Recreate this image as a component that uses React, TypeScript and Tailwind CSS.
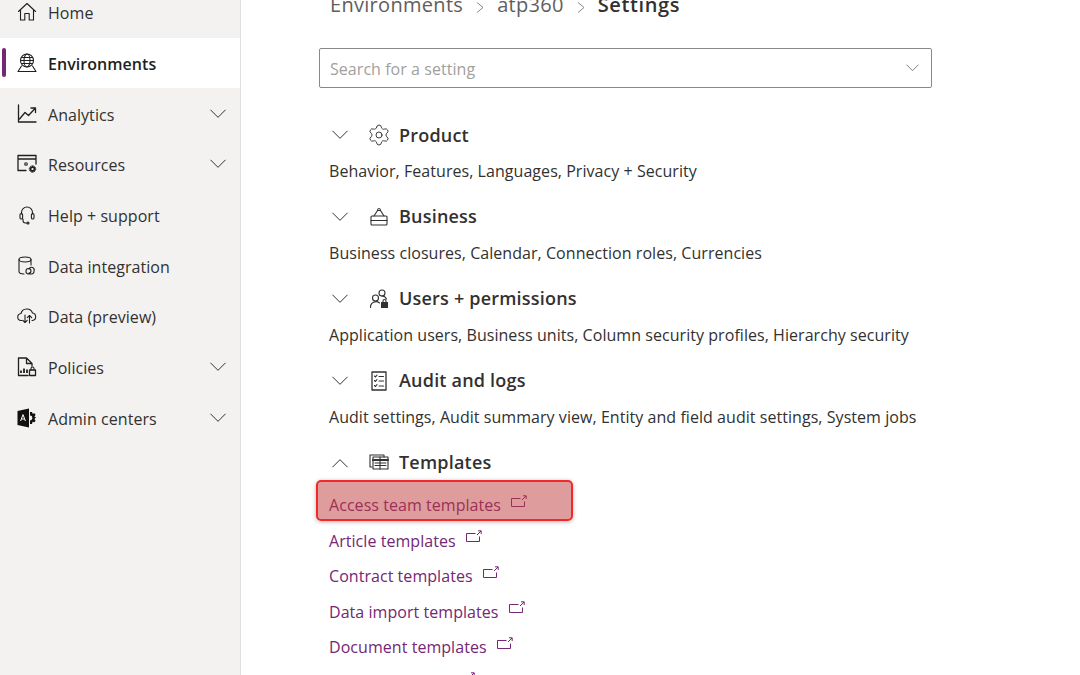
import React from 'react';
import { Settings } from 'lucide-react';

type IconProps = { className?: string };

const Svg: React.FC<IconProps & { children: React.ReactNode; box?: string }> = ({ className, children, box = '0 0 20 20' }) => (
  <svg className={className} viewBox={box} fill="none" stroke="currentColor" strokeWidth={1.1} strokeLinejoin="round" strokeLinecap="round">
    {children}
  </svg>
);

const Chevron: React.FC<{ up?: boolean; className?: string }> = ({ up, className }) => (
  <svg className={className} viewBox="0 0 20 12" fill="none" stroke="currentColor" strokeWidth={1.2}>
    <path d={up ? 'M1 11 L10 2 L19 11' : 'M1 1 L10 10 L19 1'} />
  </svg>
);

const CrumbArrow = () => (
  <svg className="mx-[13px] mt-[4px] h-[11px] w-[8px] text-[#8a8886]" viewBox="0 0 8 11" fill="none" stroke="currentColor" strokeWidth={1}>
    <path d="M1 0.5 L7 5.5 L1 10.5" />
  </svg>
);

const HomeIcon = ({ className }: IconProps) => (
  <Svg className={className}>
    <path d="M1.5 9.5 L10 1.5 L18.5 9.5 M3.5 8 V18 H7.8 V11.5 H12.2 V18 H16.5 V8" />
  </Svg>
);
const GlobeIcon = ({ className }: IconProps) => (
  <Svg className={className}>
    <circle cx="10" cy="7.5" r="6.5" />
    <ellipse cx="10" cy="7.5" rx="3" ry="6.5" />
    <path d="M3.5 7.5 H16.5 M4.5 4.5 H15.5 M4.5 10.5 H15.5 M4.5 13 L1 18.5 H19 L15.5 13" />
  </Svg>
);
const ChartIcon = ({ className }: IconProps) => (
  <Svg className={className}>
    <path d="M1.5 1 V18 H19" strokeWidth={1.3} />
    <path d="M2.5 15 L8 8.5 L11.5 11.5 L18 4.5 M14 4 H18.5 V8.5" strokeWidth={1.3} />
  </Svg>
);
const ResourceIcon = ({ className }: IconProps) => (
  <Svg className={className}>
    <path d="M9 16.5 H1 V1.5 H19 V10 M1 5 H19" strokeWidth={1.3} />
    <circle cx="9" cy="10" r="1.3" />
    <circle cx="15.5" cy="15" r="2" strokeWidth={1.8} strokeDasharray="1.6 0.6" />
    <circle cx="15.5" cy="15" r="3.2" strokeWidth={1} strokeDasharray="1.2 1.2" />
  </Svg>
);
const HeadsetIcon = ({ className }: IconProps) => (
  <Svg className={className}>
    <path d="M4.5 9 V7.5 a5.5 5.5 0 0 1 11 0 V9" />
    <rect x="3" y="8.5" width="2.6" height="5.5" rx="1.3" />
    <rect x="14.4" y="8.5" width="2.6" height="5.5" rx="1.3" />
    <path d="M6 14 V15.5 a2.5 2.5 0 0 0 2.5 2.5 H10" />
    <circle cx="11" cy="18" r="1" />
  </Svg>
);
const DataIntegrationIcon = ({ className }: IconProps) => (
  <Svg className={className}>
    <ellipse cx="8" cy="3.5" rx="6" ry="2.5" />
    <path d="M2 3.5 V15.5 C2 17 4 18 7 18 M14 3.5 V9" />
    <path d="M9 15 a2.5 2.5 0 0 1 5 0 a2 2 0 0 1 -2 2 M12 13 a2.5 2.5 0 0 1 5 2 a2.5 2.5 0 0 1 -2.5 3 H11 a2.5 2.5 0 0 1 -2 -3" />
  </Svg>
);
const CloudIcon = ({ className }: IconProps) => (
  <Svg className={className}>
    <path d="M5 14.5 H4.5 a3.5 3.5 0 0 1 -0.5 -7 a6 6 0 0 1 11.5 -0.5 a3.8 3.8 0 0 1 0 7.5 H15" />
    <path d="M8 9 V16.5 M5.8 14.3 L8 16.5 L10.2 14.3 M12.5 17 V9.5 M10.3 11.7 L12.5 9.5 L14.7 11.7" />
  </Svg>
);
const PolicyIcon = ({ className }: IconProps) => (
  <Svg className={className}>
    <path d="M11 18.5 H1.5 V1 H9.5 L15 6.5 V9 M9.5 1 V6.5 H15" strokeWidth={1.3} />
    <path d="M4 16 V13.5 M7 16 V11.5 M10 16 V12.5" strokeWidth={1.8} strokeLinecap="butt" />
    <rect x="12.5" y="13" width="6" height="5.5" strokeWidth={1.3} />
    <path d="M14 13 V11.5 a1.5 1.5 0 0 1 3 0 V13" />
  </Svg>
);
const AdminIcon = ({ className }: IconProps) => (
  <svg className={className} viewBox="0 0 20 20">
    <path d="M0.5 3 L12 0.5 V19.5 L0.5 17 Z" fill="#111" />
    <path d="M13 4 h2 l0.6 1.8 l1.8 -0.6 l1.2 1.6 l-1.2 1.6 l1.6 1.1 l-1.6 1.6 l1.2 1.6 l-1.2 1.6 l-1.8 -0.6 L15 16 h-2 v-3.6 a2.4 2.4 0 0 0 0 -4.8 Z" fill="#111" />
    <path d="M3.6 13 L6 6.6 L8.4 13 M4.5 11 H7.5" fill="none" stroke="#fff" strokeWidth={1} />
  </svg>
);

// lucide's gear only fills 20 of its 24 units, so it is drawn larger to reach the 20px slot
const GearIcon = () => <Settings className="-my-[2px] ml-[17px] -mr-[2px] h-[24px] w-[24px]" strokeWidth={0.95} />;
const BusinessIcon = ({ className }: IconProps) => (
  <Svg className={className}>
    <rect x="2" y="9" width="16" height="9" rx="1" />
    <path d="M2 13.5 H18 M5 9 L8.5 3.5 H11.5 L15 9" />
    <path d="M8.5 3.5 a1.5 2 0 0 1 3 0" />
  </Svg>
);
const UsersLockIcon = ({ className }: IconProps) => (
  <Svg className={className}>
    <circle cx="6.5" cy="9" r="3" />
    <path d="M1.5 18.5 a5.5 5.5 0 0 1 9 -4.5" />
    <circle cx="13" cy="4" r="3" />
    <path d="M13 7 a5 5 0 0 1 4.5 3" />
    <rect x="12.5" y="13.5" width="6" height="5" fill="currentColor" />
    <path d="M14 13.5 V12 a1.5 1.5 0 0 1 3 0 V13.5" />
  </Svg>
);
const ChecklistIcon = ({ className }: IconProps) => (
  <Svg className={className}>
    <rect x="3" y="1" width="14" height="18" strokeWidth={1.3} />
    <path d="M5.5 5 L6.5 6 L8 4 M10 5.5 H14.5 M5.5 9.5 L6.5 10.5 L8 8.5 M10 10 H14.5 M5.5 14.5 L6.5 15.5 L8 13.5 M10 15 H14.5" />
  </Svg>
);
const TemplatesIcon = ({ className }: IconProps) => (
  <Svg className={className}>
    <path d="M3 14 H1 V2 H15 V4" />
    <rect x="4" y="4" width="15" height="12" />
    <path d="M4 7 H19" strokeWidth={2} />
    <path d="M6 10 H17 M6 12.5 H17 M11 4 V16" />
  </Svg>
);
const ExternalIcon = () => (
  <svg className="mb-[8px] ml-[10px] h-[13px] w-[16px] shrink-0" viewBox="0 0 16 13" fill="none" stroke="currentColor" strokeWidth={1}>
    <path d="M9.5 3.5 H0.5 V11.5 H13.5 V6.5" />
    <path d="M11 5 L15 1 M12 0.8 H15.2 V4" />
  </svg>
);

const nav = [
  { label: 'Home', Icon: HomeIcon },
  { label: 'Environments', Icon: GlobeIcon, active: true },
  { label: 'Analytics', Icon: ChartIcon, more: true },
  { label: 'Resources', Icon: ResourceIcon, more: true },
  { label: 'Help + support', Icon: HeadsetIcon },
  { label: 'Data integration', Icon: DataIntegrationIcon },
  { label: 'Data (preview)', Icon: CloudIcon },
  { label: 'Policies', Icon: PolicyIcon, more: true },
  { label: 'Admin centers', Icon: AdminIcon, more: true },
];

const sections = [
  { title: 'Product', Icon: null, text: 'Behavior, Features, Languages, Privacy + Security' },
  { title: 'Business', Icon: BusinessIcon, text: 'Business closures, Calendar, Connection roles, Currencies' },
  { title: 'Users + permissions', Icon: UsersLockIcon, text: 'Application users, Business units, Column security profiles, Hierarchy security' },
  { title: 'Audit and logs', Icon: ChecklistIcon, text: 'Audit settings, Audit summary view, Entity and field audit settings, System jobs' },
];

const templates = ['Article templates', 'Contract templates', 'Data import templates', 'Document templates', 'Email templates'];

export default function App() {
  return (
    <div className="flex h-[675px] w-[1080px] overflow-hidden bg-white font-['Open_Sans',sans-serif] text-[16px] tracking-[0.05px] text-[#323130]">
      {/* Left nav */}
      <aside className="h-full w-[241px] shrink-0 overflow-hidden border-r border-[#e1dfdd] bg-[#f3f2f1]">
        <div className="-mt-[13px]">
          {nav.map(({ label, Icon, active, more }) => (
            <div key={label} className={`relative flex h-[50.7px] items-center pl-[17px] pr-[13px] ${active ? 'bg-white font-semibold text-[#201f1e]' : ''}`}>
              {active && <div className="absolute left-[2px] top-[10px] h-[29px] w-[4px] rounded-full bg-[#742774]" />}
              <Icon className="h-[20px] w-[20px] shrink-0 text-[#201f1e]" />
              <span className="ml-[11px] mt-[2px] flex-1">{label}</span>
              {more && <Chevron className="h-[10px] w-[18px] text-[#323130]" />}
            </div>
          ))}
        </div>
      </aside>

      {/* Main */}
      <main className="flex-1 pl-[78px]">
        <div className="-mt-[13px] flex h-[36px] items-center pl-[11px] text-[20px] tracking-[0.3px] text-[#605e5c]">
          <span>Environments</span>
          <CrumbArrow />
          <span>atp360</span>
          <CrumbArrow />
          <span className="font-semibold tracking-[0.6px] text-[#323130]">Settings</span>
        </div>

        <div className="mt-[25px] flex h-[40px] w-[613px] items-center justify-between rounded-[2px] border border-[#8a8886] pl-[10px] pr-[11px] text-[#a19f9d]">
          <span className="mt-[2px]">Search for a setting</span>
          <Chevron className="h-[8px] w-[15px] text-[#605e5c]" />
        </div>

        <div className="mt-[28px] pl-[10px]">
          {sections.map(({ title, Icon, text }) => (
            <div key={title} className="h-[81.9px]">
              <div className="flex h-[38px] items-center">
                <Chevron className="ml-[1px] h-[10px] w-[20px]" />
                {Icon ? <Icon className="ml-[19px] h-[20px] w-[20px]" /> : <GearIcon />}
                <span className="ml-[10px] text-[18px] font-semibold tracking-[0.2px]">{title}</span>
              </div>
              <div className="mt-[4px] leading-[26px]">{text}</div>
            </div>
          ))}

          <div className="flex h-[38px] items-center">
            <Chevron up className="ml-[1px] h-[10px] w-[20px]" />
            <TemplatesIcon className="ml-[19px] h-[20px] w-[20px]" />
            <span className="ml-[10px] text-[18px] font-semibold tracking-[0.2px]">Templates</span>
          </div>

          <div className="relative mt-[6px] flex h-[35.5px] items-center text-[#742774]">
            <span>Access team templates</span>
            <ExternalIcon />
            <div className="absolute -left-[13px] -top-[8px] h-[41px] w-[257px] rounded-[5px] border-2 border-[#f02a2a] bg-[#c03a3a]/50 shadow-[0_1px_4px_rgba(0,0,0,0.3)]" />
          </div>
          {templates.map((t) => (
            <div key={t} className="flex h-[35.5px] items-center text-[#742774]">
              <span>{t}</span>
              <ExternalIcon />
            </div>
          ))}
        </div>
      </main>
    </div>
  );
}
